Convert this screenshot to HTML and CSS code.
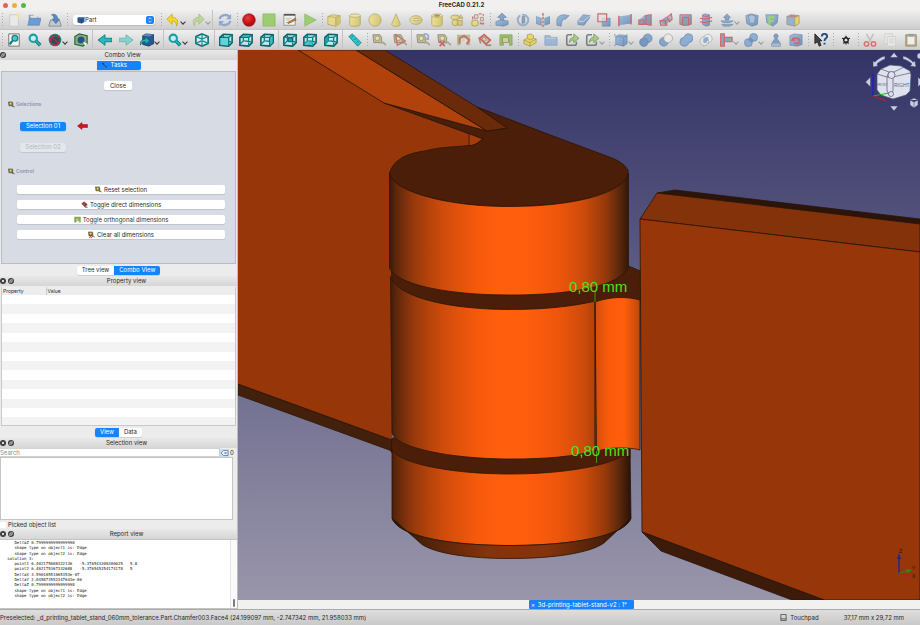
FILE: index.html
```html
<!DOCTYPE html>
<html lang="en">
<head>
<meta charset="utf-8">
<title>FreeCAD 0.21.2</title>
<link rel="stylesheet" href="styles.css">
</head>
<body>
<svg class="sprite" aria-hidden="true">
  <defs>
    <linearGradient id="gYellow"><stop offset="0" stop-color="#f0e28a"/><stop offset="1" stop-color="#d2bf5a"/></linearGradient>
    <linearGradient id="gBlue" x2="1" y2="1"><stop offset="0" stop-color="#8fb4dc"/><stop offset="1" stop-color="#5b84b4"/></linearGradient>
    <radialGradient id="gRed" cx=".4" cy=".35"><stop offset="0" stop-color="#ee3a3a"/><stop offset="1" stop-color="#b90d12"/></radialGradient>
  </defs>
  <symbol id="new" viewBox="0 0 16 16"><path d="M3 2h10v13H3z" fill="#e9e9e7" stroke="#c9c9c6"/><path d="M13 0l1 2 2 1-2 1-1 2-1-2-2-1 2-1z" fill="#f3ea7c"/></symbol>
  <symbol id="open" viewBox="0 0 16 16"><path d="M2 2h5l1 2h5v8H2z" fill="#8d9eae"/><path d="M4 3h8v6H4z" fill="#dfe4ea"/><path d="M1 14L3 6h13l-2 8z" fill="#6d9bd3" stroke="#5380b8" stroke-width=".7"/></symbol>
  <symbol id="save" viewBox="0 0 16 16"><path d="M1 14l2-6h10l2 6v1H1z" fill="#c4c8cd" stroke="#84898f"/><path d="M4 2c4-2 7 1 7 5h2l-4 5-4-5h2c0-2-1-4-3-5z" fill="#5a8ac4" stroke="#345f96" stroke-width=".7"/></symbol>
  <symbol id="part" viewBox="0 0 16 16"><path d="M1 4l5-2 9 1v9l-6 3-8-2z" fill="#2b568f"/><path d="M1 4l8 1 6-2M9 5v10" fill="none" stroke="#163258"/><path d="M1 4l5-2 9 1-6 2z" fill="#5d8cc5"/></symbol>
  <symbol id="undo" viewBox="0 0 16 16"><path d="M1 7l6-6v4c5 0 8 3 5 10 0-4-2-6-5-6v4z" fill="#f0d92a" stroke="#c3a613" stroke-width=".8"/></symbol>
  <symbol id="redo" viewBox="0 0 16 16"><path d="M15 7L9 1v4c-5 0-8 3-5 10 0-4 2-6 5-6v4z" fill="#bfd59a" stroke="#a2b981" stroke-width=".8"/></symbol>
  <symbol id="refresh" viewBox="0 0 16 16"><path d="M2 7c1-5 8-6 11-3M14 9c-1 5-8 6-11 3" fill="none" stroke="#8da9cf" stroke-width="2.6"/><path d="M15 1v6H9zM1 15V9h6z" fill="#8da9cf"/></symbol>
  <symbol id="rec" viewBox="0 0 16 16"><circle cx="8" cy="8" r="7.2" fill="url(#gRed)" stroke="#8c1518" stroke-width=".7"/></symbol>
  <symbol id="stop" viewBox="0 0 16 16"><path d="M1 1h14v14H1z" fill="#9dcc72" stroke="#86b45f" stroke-width=".7"/></symbol>
  <symbol id="edit" viewBox="0 0 16 16"><path d="M1 2h13v12H1z" fill="#f2f2ee" stroke="#8c8c88"/><path d="M1 1h13v2H1z" fill="#55554f"/><path d="M3 6h7M3 8h5M3 11h6" stroke="#b9b9b4"/><path d="M5 11l9-5 1 2-9 4z" fill="#c88433" stroke="#6b451c" stroke-width=".6"/></symbol>
  <symbol id="play" viewBox="0 0 16 16"><path d="M2 1l13 7-13 7z" fill="#9dcc72" stroke="#86b45f" stroke-width=".7"/></symbol>
  <symbol id="cube" viewBox="0 0 16 16"><path d="M1 4l5-2 9 1v9l-5 3-9-2z" fill="#ead979" stroke="#9f9240" stroke-width=".8"/><path d="M10 5l5-2v9l-5 3z" fill="#cfbd58"/><path d="M1 4l9 1 5-2M10 5v10" fill="none" stroke="#9f9240" stroke-width=".8"/></symbol>
  <symbol id="cyl" viewBox="0 0 16 16"><path d="M2 3v10c0 3 12 3 12 0V3z" fill="url(#gYellow)" stroke="#9f9240" stroke-width=".8"/><ellipse cx="8" cy="3" rx="6" ry="2" fill="#f1e69c" stroke="#9f9240" stroke-width=".8"/></symbol>
  <symbol id="sphere" viewBox="0 0 16 16"><circle cx="8" cy="8" r="7" fill="url(#gYellow)" stroke="#9f9240" stroke-width=".8"/></symbol>
  <symbol id="cone" viewBox="0 0 16 16"><path d="M8 1L3 13c1 3 9 3 10 0z" fill="url(#gYellow)" stroke="#9f9240" stroke-width=".8"/></symbol>
  <symbol id="torus" viewBox="0 0 16 16"><ellipse cx="8" cy="8" rx="7" ry="5" fill="url(#gYellow)" stroke="#9f9240" stroke-width=".8"/><ellipse cx="8" cy="7.5" rx="3" ry="1.5" fill="#e0e0de" stroke="#9f9240" stroke-width=".8"/></symbol>
  <symbol id="tube" viewBox="0 0 16 16"><path d="M2 3v10c0 3 12 3 12 0V3z" fill="url(#gYellow)" stroke="#9f9240" stroke-width=".8"/><ellipse cx="8" cy="3" rx="6" ry="2" fill="#f1e69c" stroke="#9f9240" stroke-width=".8"/><ellipse cx="8" cy="3" rx="3.500" ry="1.200" fill="#8d8244"/></symbol>
  <symbol id="prims" viewBox="0 0 16 16"><ellipse cx="6" cy="5" rx="5" ry="2.5" fill="url(#gYellow)" stroke="#9f9240"/><circle cx="6" cy="11" r="3.5" fill="url(#gYellow)" stroke="#9f9240"/><path d="M9 9l5-1v6H9zM12 2l3 4h-4z" fill="#d8c75f" stroke="#9f9240" stroke-width=".8"/></symbol>
  <symbol id="builder" viewBox="0 0 16 16"><path d="M1 9l4-1 3 1v5l-4 1-3-1z" fill="#ead979" stroke="#9f9240"/><path d="M4 2h4v4H4zM11 5h3v4h-3z" fill="#e8d9d5" stroke="#a7746c"/><path d="M9 1h3M2 4v3M14 1v2M10 12h5" stroke="#c9565a" stroke-width="1.6"/><path d="M10 10l4 4" stroke="#8c8c88"/></symbol>
  <symbol id="extrude" viewBox="0 0 16 16"><path d="M8 0l5 5h-3v4H6V5H3z" fill="#6c95c6" stroke="#44698f" stroke-width=".7"/><path d="M1 10l5-2 9 1v4l-5 2-9-1z" fill="url(#gBlue)" stroke="#4d7196" stroke-width=".7"/></symbol>
  <symbol id="revolve" viewBox="0 0 16 16"><circle cx="8" cy="8" r="6" fill="none" stroke="#8aa6c6" stroke-width="2.4"/><path d="M7 4h3v7l-3 1z" fill="#6f95c1" stroke="#4d7196" stroke-width=".7"/><path d="M6 0v4" stroke="#eaeaea" stroke-width="2"/></symbol>
  <symbol id="mirror" viewBox="0 0 16 16"><path d="M0 4l6 2v8l-6-2zM16 4l-6 2v8l6-2z" fill="url(#gBlue)" stroke="#4d7196" stroke-width=".6"/><path d="M8 0v16" stroke="#c9494d" stroke-width="1.6" stroke-dasharray="3 1.4"/></symbol>
  <symbol id="fillet" viewBox="0 0 16 16"><path d="M1 14V9c0-5 4-7 8-7l6 1-4 4c-3 0-5 2-5 8z" fill="url(#gBlue)" stroke="#4d7196" stroke-width=".7"/></symbol>
  <symbol id="chamfer" viewBox="0 0 16 16"><path d="M1 13V9l6-7 8 1-1 3-6 8z" fill="url(#gBlue)" stroke="#4d7196" stroke-width=".7"/><path d="M1 9l6 1 8-7" fill="none" stroke="#c5d7ea"/></symbol>
  <symbol id="face" viewBox="0 0 16 16"><path d="M6 6h9v9H6z" fill="url(#gBlue)" stroke="#4d7196" stroke-width=".7"/><path d="M1 1h10v9H1z" fill="#e2dfde" fill-opacity=".7" stroke="#cf4a4e" stroke-width="1.4"/></symbol>
  <symbol id="ruled" viewBox="0 0 16 16"><path d="M1 4l14-2v10L1 14z" fill="url(#gBlue)"/><path d="M1 3v12M15 1v12" stroke="#cf4a4e" stroke-width="1.6"/></symbol>
  <symbol id="loft" viewBox="0 0 16 16"><path d="M1 8l7-6 7 1v11L1 13z" fill="url(#gBlue)"/><path d="M1 8h6v5H1zM9 3l6-1v12l-6-1z" fill="#71829b" fill-opacity=".5" stroke="#cf4a4e" stroke-width="1.3"/></symbol>
  <symbol id="sweep" viewBox="0 0 16 16"><path d="M1 9l7-5 5 3-5 7z" fill="url(#gBlue)"/><path d="M1 9l6-1 2 6H2zM9 5l5-4 1 6-3 3z" fill="#71829b" fill-opacity=".5" stroke="#cf4a4e" stroke-width="1.3"/></symbol>
  <symbol id="section" viewBox="0 0 16 16"><path d="M1 2h13v11H1z" fill="url(#gBlue)" stroke="#a4555c"/><path d="M4 5h7v9H4z" fill="#7590b0" stroke="#cf4a4e" stroke-width="1.4"/></symbol>
  <symbol id="cross" viewBox="0 0 16 16"><path d="M4 2l3-1 5 1v12l-4 1-4-2z" fill="url(#gBlue)" stroke="#4d7196" stroke-width=".7"/><path d="M1 6l6 1 8-2M1 10l6 1 8-2M4 3l4 1 4-1" fill="none" stroke="#cf4a4e" stroke-width="1.3"/></symbol>
  <symbol id="offset" viewBox="0 0 16 16"><path d="M8 1l4 4h-2v3H6V5H4z" fill="#6c95c6" stroke="#44698f" stroke-width=".7"/><path d="M1 9h14l-4 2H4zM2 13h13l-4 2H4z" fill="#86a8cf" stroke="#4d7196" stroke-width=".7"/></symbol>
  <symbol id="thick" viewBox="0 0 16 16"><path d="M1 3l6-2 8 2-1 10-6 2-6-3z" fill="url(#gBlue)" stroke="#4d7196" stroke-width=".8"/><path d="M4 3l4-1 4 2-1 7-4 1-2-2z" fill="#9dbbdc" stroke="#4d7196" stroke-width=".7"/></symbol>
  <symbol id="proj" viewBox="0 0 16 16"><path d="M1 2h14l-1 9-5 4-7-4z" fill="url(#gBlue)" stroke="#4d7196" stroke-width=".7"/><path d="M5 14V5h6M5 9h5" fill="none" stroke="#8fcf5a" stroke-width="2.4"/></symbol>
  <symbol id="color" viewBox="0 0 16 16"><path d="M1 4l5-2 9 1-5 2z" fill="#d66d64"/><path d="M1 4l9 1v10l-9-2z" fill="#86a8cf"/><path d="M10 5l5-2v9l-5 3z" fill="#ecd23f"/><path d="M1 4l5-2 9 1v9l-5 3-9-2zM1 4l9 1 5-2M10 5v10" fill="none" stroke="#7c7666" stroke-width=".7"/></symbol>
  <symbol id="fitall" viewBox="0 0 16 16"><path d="M2 1h12v14H2z" fill="#f4f4f2" stroke="#6c6c68"/><circle cx="9" cy="6" r="3.3" fill="#55c3c6" stroke="#127f87" stroke-width="1.4"/><path d="M6 9l-3 4" stroke="#127f87" stroke-width="2.6"/></symbol>
  <symbol id="zoom" viewBox="0 0 16 16"><circle cx="6" cy="6" r="4.2" fill="#c9ecec" stroke="#14a0a6" stroke-width="2.4"/><path d="M9 9l5 5" stroke="#0c6c75" stroke-width="4"/><path d="M9 9l5 5" stroke="#21bcc0" stroke-width="2"/></symbol>
  <symbol id="draw" viewBox="0 0 16 16"><circle cx="8" cy="8" r="7.2" fill="#177f86"/><path d="M4 6l4-2 5 2v5l-4 2-5-2z" fill="#2a4c62"/><circle cx="8" cy="8" r="5.4" fill="none" stroke="#b62c2c" stroke-width="1.6"/><path d="M4 4l8 8" stroke="#b62c2c" stroke-width="1.6"/></symbol>
  <symbol id="bbox" viewBox="0 0 16 16"><path d="M1 4l5-3 9 2v9l-5 3-9-2z" fill="#84b37c" stroke="#28693c" stroke-width="1.4"/><circle cx="8" cy="8" r="4" fill="#2b4f8b"/><path d="M10 10l5 2-2 3z" fill="#f4f4f4"/></symbol>
  <symbol id="back" viewBox="0 0 16 16"><path d="M0 8l8-6v4h8v4H8v4z" fill="#21bcc0" stroke="#0c6c75" stroke-width=".9"/></symbol>
  <symbol id="fwd" viewBox="0 0 16 16"><path d="M16 8L8 2v4H0v4h8v4z" fill="#86d3d1" stroke="#65adae" stroke-width=".9"/></symbol>
  <symbol id="linkview" viewBox="0 0 16 16"><path d="M3 3l4-2 9 1v10l-6 3-7-2z" fill="#2b568f" stroke="#163258" stroke-width=".8"/><path d="M3 3l4-2 9 1-6 2z" fill="#5d8cc5"/><path d="M0 14c0-5 3-7 6-7V4l5 5-5 4v-3c-3 0-4 1-6 4z" fill="#1fb3b8" stroke="#0c5d68" stroke-width=".8"/></symbol>
  <symbol id="iso" viewBox="0 0 16 16"><path d="M8 1l7 3v8l-7 3-7-3V4z" fill="#d5eeec" stroke="#0b6b73" stroke-width="1.800"/><path d="M1 4l7 3 7-3M8 7v8M8 1v5M1 12l6-3M15 12l-6-3" fill="none" stroke="#0f8d93" stroke-width="1.400"/></symbol>
  <symbol id="vcube" viewBox="0 0 16 16"><path d="M1 5l4-3.500 10 .5v9l-4 4-10-1z" fill="#bfe8e6" stroke="#0b5f68" stroke-width="1.800"/><path d="M1 5h10l4-3M11 5v10M5 2v7l-4 4M6 9l8 1" fill="none" stroke="#0f8088" stroke-width="1.500"/></symbol>
  <symbol id="front" viewBox="0 0 16 16"><use href="#vcube"/><path d="M1 5h10v10l-10-1z" fill="#5ed6d8" stroke="#0b5f68"/></symbol>
  <symbol id="top" viewBox="0 0 16 16"><use href="#vcube"/><path d="M1 5l4-3 10 0-4 3z" fill="#34c4c8" stroke="#0b5f68"/></symbol>
  <symbol id="right" viewBox="0 0 16 16"><use href="#vcube"/><path d="M11 5l4-3v9l-4 4z" fill="#34c4c8" stroke="#0b5f68"/></symbol>
  <symbol id="rear" viewBox="0 0 16 16"><use href="#vcube"/><path d="M6 6h5v4H6z" fill="#16a5aa" stroke="#0b5f68"/></symbol>
  <symbol id="bottom" viewBox="0 0 16 16"><use href="#vcube"/><path d="M2 13l4-3h5v4z" fill="#34c4c8"/></symbol>
  <symbol id="left" viewBox="0 0 16 16"><use href="#vcube"/><path d="M2 6l3-3v6l-3 4z" fill="#16a5aa"/></symbol>
  <symbol id="ruler" viewBox="0 0 16 16"><path d="M1 4l4-3 10 10-4 4z" fill="#2fc4cb" stroke="#0c7a84" stroke-width=".9"/><path d="M6 3L4 5M9 6L7 8M12 9l-2 2" stroke="#0c7a84"/></symbol>
  <symbol id="tape" viewBox="0 0 16 16"><path d="M1 2h8l2 3v6H2z" fill="#b9b488" stroke="#77745f"/><circle cx="6" cy="6" r="2.6" fill="#ece284" stroke="#7a7a70" stroke-width=".8"/><path d="M9 11h4l3 3" fill="none" stroke="#9c9a7c" stroke-width="2"/></symbol>
  <symbol id="angle" viewBox="0 0 16 16"><use href="#tape"/><path d="M3 2l11 7-9 5z" fill="none" stroke="#c2565a" stroke-width="1.5"/></symbol>
  <symbol id="tref" viewBox="0 0 16 16"><use href="#tape"/><path d="M8 3c2-3 5-2 6 0v4H9" fill="none" stroke="#829fc5" stroke-width="2"/></symbol>
  <symbol id="tclear" viewBox="0 0 16 16"><use href="#tape"/><path d="M3 9l6 6M9 9l-6 6" stroke="#c8484d" stroke-width="2"/></symbol>
  <symbol id="tall" viewBox="0 0 16 16"><path d="M0 2h15v12h-3V6H4v8H0z" fill="#9bbd79"/><path d="M3 12V6l5-3 6 5-3 5" fill="none" stroke="#c65457" stroke-width="2.3"/><circle cx="7" cy="8" r="2" fill="#d4cf8a"/></symbol>
  <symbol id="tdir" viewBox="0 0 16 16"><path d="M2 6l5-4 7 6-5 5z" fill="#c6b99a" stroke="#c24a4e" stroke-width="2"/><circle cx="7" cy="7" r="2" fill="#ddd48a" stroke="#8d6b58" stroke-width=".8"/><path d="M1 5l2 7M9 14h6" stroke="#8d6b58" stroke-width="1.6"/></symbol>
  <symbol id="torth" viewBox="0 0 16 16"><path d="M1 2h14v12h-3V9H5v5H1z" fill="#86b84f" stroke="#5f8d38" stroke-width=".7"/><path d="M4 5h7v6H4z" fill="#d3cc80" stroke="#6f6c4f" stroke-width=".8"/></symbol>
  <symbol id="ypart" viewBox="0 0 16 16"><path d="M1 8l4-2V2l4-1 3 2v3l3 1v4l-7 4-7-3z" fill="#e9d44a" stroke="#8f7d2a" stroke-width=".8"/><path d="M1 8l7 3 7-4M8 11v4M5 6l4 2 3-2" fill="none" stroke="#8f7d2a" stroke-width=".8"/></symbol>
  <symbol id="folder" viewBox="0 0 16 16"><path d="M1 3h6l1 2h7v9H1z" fill="#8eaed3" stroke="#7593b8" stroke-width=".8"/><path d="M2 6h12" stroke="#b5cbe3"/></symbol>
  <symbol id="link" viewBox="0 0 16 16"><path d="M8 2H4q-2 0-2 2v8q0 2 2 2h7q2 0 2-2v-2" fill="none" stroke="#5f676b" stroke-width="1.800"/><path d="M5 11c0-4 2-6 5-6V1l6 5-6 5V8c-2 0-4 1-5 3z" fill="#93c869" stroke="#53833a" stroke-width=".8"/></symbol>
  <symbol id="bcube" viewBox="0 0 16 16"><path d="M2 4l4-2 9 1v9l-4 3-9-2z" fill="url(#gBlue)" stroke="#4d7196" stroke-width=".7"/><path d="M2 4l9 1 4-2M11 5v10" fill="none" stroke="#4d7196" stroke-width=".7"/><path d="M1 1v3M15 1v1M1 13v2" stroke="#777"/></symbol>
  <symbol id="bool" viewBox="0 0 16 16"><circle cx="10" cy="6" r="5" fill="#6f97c6" stroke="#456a96" stroke-width=".7"/><circle cx="5.5" cy="10.500" r="4.8" fill="#5f88b8" stroke="#456a96" stroke-width=".7"/></symbol>
  <symbol id="cutb" viewBox="0 0 16 16"><circle cx="5.500" cy="10" r="5" fill="#6f97c6" stroke="#456a96" stroke-width=".7"/><circle cx="10.500" cy="6" r="5" fill="#e9e9e7" stroke="#8f8f8c" stroke-width=".8"/></symbol>
  <symbol id="union" viewBox="0 0 16 16"><path d="M6 5a5 5 0 1 1 5 6 5 5 0 1 1-5-6z" fill="#7ba2cf" stroke="#456a96" stroke-width=".8"/></symbol>
  <symbol id="common" viewBox="0 0 16 16"><circle cx="10" cy="6.500" r="5" fill="#eeeeec" stroke="#9a9a98" stroke-width=".8"/><circle cx="6" cy="9.500" r="5" fill="#eeeeec" fill-opacity=".6" stroke="#9a9a98" stroke-width=".8"/><path d="M5.500 6.500c1-1 3-2 5-2 1 3-1 6-4 7-2 0-2-3-1-5z" fill="#7ba2cf"/></symbol>
  <symbol id="join" viewBox="0 0 16 16"><path d="M2 1h4v14H2z" fill="#8a96ad" stroke="#cf4a4e" stroke-width="1.5"/><path d="M6 5h9v5H6z" fill="#7796bd" stroke="#cf4a4e" stroke-width="1.3"/></symbol>
  <symbol id="split" viewBox="0 0 16 16"><circle cx="11" cy="5" r="4.500" fill="#7ba2cf" stroke="#456a96" stroke-width=".7"/><circle cx="5" cy="11" r="4.500" fill="#7ba2cf" stroke="#456a96" stroke-width=".7"/><path d="M6 6l4 4" stroke="#5a80ae" stroke-width="4"/></symbol>
  <symbol id="check" viewBox="0 0 16 16"><path d="M8 1c3 0 3 4 1 5l4 6v3H3v-3l4-6C5 5 5 1 8 1z" fill="#6c8fbb" stroke="#4a6686" stroke-width=".7"/><path d="M3 12h10v3H3z" fill="#9cb5d0"/></symbol>
  <symbol id="defeat" viewBox="0 0 16 16"><path d="M1 3l5-2 9 1v11l-5 2-9-1z" fill="url(#gBlue)" stroke="#4d7196" stroke-width=".7"/><path d="M4 8c3-4 8-2 8 1s-3 4-6 2" fill="none" stroke="#cf4a4e" stroke-width="2"/><path d="M2 9l3-5 2 5z" fill="#cf4a4e"/></symbol>
  <symbol id="whats" viewBox="0 0 16 16"><path d="M1 1l8 8H6l2 5-2 1-2-5-3 2z" fill="#3e4549" stroke="#222"/><path d="M9 4c0-4 6-4 6 0 0 2-3 2-3 5M12 11v2" fill="none" stroke="#234f85" stroke-width="2.200"/></symbol>
  <symbol id="star" viewBox="0 0 16 16"><circle cx="8" cy="8" r="2.600" fill="none" stroke="#222" stroke-width="1.500"/><path d="M8 3v3M8 10v3M3.500 6l3 1M12.500 6l-3 1M5 12l2-2M11 12l-2-2" stroke="#222" stroke-width="1.400"/></symbol>
  <symbol id="scis" viewBox="0 0 16 16"><path d="M4 1l5 9M12 1l-5 9" stroke="#bdbdbb" stroke-width="1.600"/><circle cx="4" cy="12.500" r="2.500" fill="none" stroke="#dc6e6e" stroke-width="1.700"/><circle cx="12" cy="12.500" r="2.500" fill="none" stroke="#dc6e6e" stroke-width="1.700"/></symbol>
  <symbol id="copy" viewBox="0 0 16 16"><path d="M2 1h9v11H2z" fill="#e8e8e6" stroke="#cfcfcc"/><path d="M5 4h9v11H5z" fill="#e8e8e6" stroke="#cfcfcc"/><path d="M7 7h5M7 9h5M7 11h5" stroke="#cfcfcc"/></symbol>
  <symbol id="paste" viewBox="0 0 16 16"><path d="M2 2h12v13H2z" fill="#b8ac8a" stroke="#978d70"/><path d="M4 4h8v9H4z" fill="#efefea"/><path d="M5 1h6v3H5z" fill="#9b9d9b"/></symbol>
  <symbol id="mtape" viewBox="0 0 16 16"><path d="M1 2h9l1 3v6H2z" fill="#6e6a33" stroke="#3d3b2c"/><circle cx="6" cy="6" r="2.600" fill="#e6da55"/><path d="M9 12h4l3 3" fill="none" stroke="#4b4931" stroke-width="2"/></symbol>
  <symbol id="mdir" viewBox="0 0 16 16"><path d="M2 6l5-4 7 6-5 5z" fill="#5b3b2c" stroke="#b22e26" stroke-width="2"/><circle cx="7" cy="7" r="1.500" fill="#d8c96a"/><path d="M9 14h6" stroke="#4b3528" stroke-width="2"/></symbol>
  <symbol id="mclear" viewBox="0 0 16 16"><use href="#mtape"/><path d="M3 9l6 6M9 9l-6 6" stroke="#b9221f" stroke-width="2.400"/></symbol>
  <symbol id="close" viewBox="0 0 16 16"><circle cx="8" cy="8" r="8" fill="#3b3b3b"/><path d="M5 5l6 6M11 5l-6 6" stroke="#fff" stroke-width="2.200"/></symbol>
  <symbol id="float" viewBox="0 0 16 16"><circle cx="8" cy="8" r="8" fill="#3b3b3b"/><path d="M7 4h5v5H7zM4 7h5v5H4z" fill="none" stroke="#ddd" stroke-width="1.400"/></symbol>
</svg>

<header>
  <div class="titlebar"><span class="lights"><i class="red"></i><i class="amber"></i><i class="green"></i></span><h1>FreeCAD 0.21.2</h1></div>
  <div class="toolbar" role="toolbar" aria-label="File and solids">
    <span class="grip"></span>
    <div class="tools file"><button aria-label="New"><svg><use href="#new"/></svg></button><button aria-label="Open"><svg><use href="#open"/></svg></button><button aria-label="Save"><svg><use href="#save"/></svg></button></div>
    <span class="grip"></span>
    <label class="workbench"><svg><use href="#part"/></svg><select aria-label="Workbench"><option>Part</option></select><svg class="chev" viewBox="0 0 8 8"><path d="M2 3l2-2 2 2M2 5l2 2 2-2"/></svg></label>
    <span class="grip"></span>
    <div class="tools history"><button class="drop" aria-label="Undo"><svg><use href="#undo"/></svg></button><button class="drop dim" aria-label="Redo"><svg><use href="#redo"/></svg></button></div>
    <span class="rule"></span>
    <div class="tools one"><button aria-label="Refresh"><svg><use href="#refresh"/></svg></button></div>
    <span class="grip"></span>
    <div class="tools macro"><button aria-label="Record"><svg><use href="#rec"/></svg></button><button aria-label="Stop"><svg><use href="#stop"/></svg></button><button aria-label="Macros"><svg><use href="#edit"/></svg></button><button aria-label="Run"><svg><use href="#play"/></svg></button></div>
    <span class="grip"></span>
    <div class="tools muted solids"><button aria-label="Cube"><svg><use href="#cube"/></svg></button><button aria-label="Cylinder"><svg><use href="#cyl"/></svg></button><button aria-label="Sphere"><svg><use href="#sphere"/></svg></button><button aria-label="Cone"><svg><use href="#cone"/></svg></button><button aria-label="Torus"><svg><use href="#torus"/></svg></button><button aria-label="Tube"><svg><use href="#tube"/></svg></button><button aria-label="Primitives"><svg><use href="#prims"/></svg></button><button aria-label="Shape builder"><svg><use href="#builder"/></svg></button></div>
    <span class="grip"></span>
    <div class="tools muted shape"><button aria-label="Extrude"><svg><use href="#extrude"/></svg></button><button aria-label="Revolve"><svg><use href="#revolve"/></svg></button><button aria-label="Mirror"><svg><use href="#mirror"/></svg></button><button aria-label="Fillet"><svg><use href="#fillet"/></svg></button><button aria-label="Chamfer"><svg><use href="#chamfer"/></svg></button><button aria-label="Make face"><svg><use href="#face"/></svg></button><button aria-label="Ruled surface"><svg><use href="#ruled"/></svg></button><button aria-label="Loft"><svg><use href="#loft"/></svg></button><button aria-label="Sweep"><svg><use href="#sweep"/></svg></button><button aria-label="Section"><svg><use href="#section"/></svg></button><button aria-label="Cross sections"><svg><use href="#cross"/></svg></button><button class="drop dim" aria-label="Offset"><svg><use href="#offset"/></svg></button><button aria-label="Thickness"><svg><use href="#thick"/></svg></button><button aria-label="Projection"><svg><use href="#proj"/></svg></button><button aria-label="Colour per face"><svg><use href="#color"/></svg></button></div>
  </div>
  <div class="toolbar" role="toolbar" aria-label="View and measure">
    <span class="grip"></span>
    <div class="tools view"><button aria-label="Fit all"><svg><use href="#fitall"/></svg></button><button aria-label="Fit selection"><svg><use href="#zoom"/></svg></button><button class="drop" aria-label="Draw style"><svg><use href="#draw"/></svg></button><button aria-label="Bounding box"><svg><use href="#bbox"/></svg></button></div>
    <span class="rule"></span>
    <div class="tools nav"><button aria-label="Back"><svg><use href="#back"/></svg></button><button aria-label="Forward"><svg><use href="#fwd"/></svg></button><button class="drop" aria-label="Linked object"><svg><use href="#linkview"/></svg></button></div>
    <span class="rule"></span>
    <div class="tools history"><button class="drop" aria-label="Zoom"><svg><use href="#zoom"/></svg></button><button aria-label="Isometric"><svg><use href="#iso"/></svg></button></div>
    <span class="rule"></span>
    <div class="tools file"><button aria-label="Front"><svg><use href="#front"/></svg></button><button aria-label="Top"><svg><use href="#top"/></svg></button><button aria-label="Right"><svg><use href="#right"/></svg></button></div>
    <span class="rule"></span>
    <div class="tools file"><button aria-label="Rear"><svg><use href="#rear"/></svg></button><button aria-label="Bottom"><svg><use href="#bottom"/></svg></button><button aria-label="Left"><svg><use href="#left"/></svg></button></div>
    <span class="rule"></span>
    <div class="tools one"><button aria-label="Measure distance"><svg><use href="#ruler"/></svg></button></div>
    <span class="grip"></span>
    <div class="tools muted two"><button aria-label="Measure linear"><svg><use href="#tape"/></svg></button><button aria-label="Measure angular"><svg><use href="#angle"/></svg></button></div>
    <span class="rule"></span>
    <div class="tools muted measure"><button aria-label="Refresh dimensions"><svg><use href="#tref"/></svg></button><button aria-label="Clear dimensions"><svg><use href="#tclear"/></svg></button><button aria-label="Toggle all"><svg><use href="#tall"/></svg></button><button aria-label="Toggle direct"><svg><use href="#tdir"/></svg></button><button aria-label="Toggle orthogonal"><svg><use href="#torth"/></svg></button></div>
    <span class="grip"></span>
    <div class="tools muted view"><button aria-label="Create part"><svg><use href="#ypart"/></svg></button><button aria-label="Create group"><svg><use href="#folder"/></svg></button><button aria-label="Make link"><svg><use href="#link"/></svg></button><button class="drop dim" aria-label="Link actions"><svg><use href="#link"/></svg></button></div>
    <span class="grip"></span>
    <div class="tools muted boolean"><button class="drop dim" aria-label="Compound"><svg><use href="#bcube"/></svg></button><button aria-label="Boolean"><svg><use href="#bool"/></svg></button><button aria-label="Cut solid"><svg><use href="#cutb"/></svg></button><button aria-label="Union"><svg><use href="#union"/></svg></button><button aria-label="Intersection"><svg><use href="#common"/></svg></button><button class="drop dim" aria-label="Join"><svg><use href="#join"/></svg></button><button class="drop dim" aria-label="Split"><svg><use href="#split"/></svg></button><button aria-label="Check geometry"><svg><use href="#check"/></svg></button><button aria-label="Defeaturing"><svg><use href="#defeat"/></svg></button></div>
    <span class="grip"></span>
    <div class="tools one"><button aria-label="What's this"><svg><use href="#whats"/></svg></button></div>
    <span class="grip"></span>
    <div class="tools one"><button aria-label="Custom macro"><svg><use href="#star"/></svg></button></div>
    <span class="grip"></span>
    <div class="tools file"><button aria-label="Cut"><svg><use href="#scis"/></svg></button><button aria-label="Copy"><svg><use href="#copy"/></svg></button><button aria-label="Paste"><svg><use href="#paste"/></svg></button></div>
  </div>
</header>

<div class="workspace">
  <aside>
    <section class="combo">
      <div class="dock-title"><button aria-label="Float panel"><svg><use href="#float"/></svg></button><h2>Combo View</h2></div>
      <div class="tabs top"><button class="on tasks-tab"><svg viewBox="0 0 16 16"><path d="M2 1l3 3 1 3 8 7-2 1-8-8-3-1-1-3z" fill="#233a5c"/></svg>Tasks</button></div>
      <div class="tasks">
        <button class="push close">Close</button>
        <h3><svg><use href="#mtape"/></svg>Selections</h3>
        <div class="sel"><button class="push on">Selection 01</button><svg class="arrow" viewBox="0 0 22 16"><path d="M1 8l9-7v4h11v6H10v4z" fill="#d3131f" stroke="#8e0d15"/></svg></div>
        <div class="sel"><button class="push" disabled>Selection 02</button></div>
        <h3 class="control"><svg><use href="#mtape"/></svg>Control</h3>
        <div class="actions">
          <button class="push"><svg><use href="#mtape"/></svg>Reset selection</button>
          <button class="push"><svg><use href="#mdir"/></svg>Toggle direct dimensions</button>
          <button class="push"><svg><use href="#torth"/></svg>Toggle orthogonal dimensions</button>
          <button class="push"><svg><use href="#mclear"/></svg>Clear all dimensions</button>
        </div>
      </div>
      <div class="tabs"><button>Tree view</button><button class="on">Combo View</button></div>
    </section>
    <section class="property">
      <div class="dock-title"><button aria-label="Close panel"><svg><use href="#close"/></svg></button><button aria-label="Float panel"><svg><use href="#float"/></svg></button><h2>Property view</h2></div>
      <div class="grid">
        <table>
          <thead><tr><th>Property</th><th>Value</th></tr></thead>
          <tbody><tr><td></td><td></td></tr><tr><td></td><td></td></tr><tr><td></td><td></td></tr><tr><td></td><td></td></tr><tr><td></td><td></td></tr><tr><td></td><td></td></tr><tr><td></td><td></td></tr><tr><td></td><td></td></tr><tr><td></td><td></td></tr><tr><td></td><td></td></tr><tr><td></td><td></td></tr><tr><td></td><td></td></tr><tr><td></td><td></td></tr><tr><td></td><td></td></tr></tbody>
        </table>
      </div>
      <div class="tabs"><button class="on">View</button><button>Data</button></div>
    </section>
    <section class="selection">
      <div class="dock-title"><button aria-label="Close panel"><svg><use href="#close"/></svg></button><button aria-label="Float panel"><svg><use href="#float"/></svg></button><h2>Selection view</h2></div>
      <div class="search"><input type="text" placeholder="Search" aria-label="Search"><button aria-label="Clear search"><svg viewBox="0 0 16 16"><path d="M1 8l5-5h9v10H6z" fill="#e9f0f8" stroke="#4b75a8" stroke-width="1.500"/><path d="M8 6l4 4M12 6l-4 4" stroke="#4b75a8" stroke-width="1.500"/></svg></button><output>0</output></div>
      <div class="list"></div>
      <label class="picked"><input type="checkbox">Picked object list</label>
    </section>
    <section class="report">
      <div class="dock-title"><button aria-label="Close panel"><svg><use href="#close"/></svg></button><button aria-label="Float panel"><svg><use href="#float"/></svg></button><h2>Report view</h2></div>
      <div class="log">
        <div class="lines"><p>      DeltaZ 0.7999999999999998</p><p>      shape type on object1 is: Edge</p><p>      shape type on object2 is: Edge</p><p>   solution 3:</p><p>      point1 6.402175008322136   -5.376543208300625   5.8</p><p>      point2 6.402175367332688   -5.376545254174178   5</p><p>      DeltaX 3.59010551065353e-07</p><p>      DeltaY 2.045873552347643e-06</p><p>      DeltaZ 0.7999999999999998</p><p>      shape type on object1 is: Edge</p><p>      shape type on object2 is: Edge</p></div>
        <div class="scroll"><i></i></div>
      </div>
    </section>
  </aside>

  <main>
    <svg class="scene" viewBox="238 50 682 550" preserveAspectRatio="xMidYMid slice" role="img" aria-label="3D view of the hinge">
      <defs>
        <linearGradient id="sky" x2="0" y2="1"><stop offset="0" stop-color="#333366"/><stop offset="1" stop-color="#9996ab"/></linearGradient>
        <linearGradient id="body" gradientUnits="userSpaceOnUse" x1="389" x2="630" y1="0" y2="0"><stop offset="0" stop-color="#37190a"/><stop offset=".03" stop-color="#5d270b"/><stop offset=".1" stop-color="#96390b"/><stop offset=".22" stop-color="#ce4b0b"/><stop offset=".36" stop-color="#f4590c"/><stop offset=".45" stop-color="#ff5e0c"/><stop offset=".57" stop-color="#ff5e0c"/><stop offset=".7" stop-color="#ee560c"/><stop offset=".8" stop-color="#d04c0b"/><stop offset=".9" stop-color="#94390b"/><stop offset=".96" stop-color="#58260b"/><stop offset="1" stop-color="#2c1409"/></linearGradient>
        <linearGradient id="web" gradientUnits="userSpaceOnUse" x1="595" x2="640" y1="0" y2="0"><stop offset="0" stop-color="#d34d0b"/><stop offset=".3" stop-color="#f95b0c"/><stop offset=".65" stop-color="#ff5e0c"/><stop offset="1" stop-color="#bd470b"/></linearGradient>
        <linearGradient id="base" gradientUnits="userSpaceOnUse" x1="392" x2="631" y1="0" y2="0"><stop offset="0" stop-color="#241108"/><stop offset=".15" stop-color="#52230a"/><stop offset=".4" stop-color="#85330b"/><stop offset=".65" stop-color="#85330b"/><stop offset=".88" stop-color="#4b1f09"/><stop offset="1" stop-color="#241108"/></linearGradient>
      </defs>
      <path d="M238 50h682v550H238z" fill="url(#sky)"/>
      <g stroke="#2b1508" stroke-width=".8" stroke-linejoin="round">
        <path d="M238 384l154 56v11L238 395z" fill="#43200b"/>
        <path d="M238 50h60l86 53 99 36-8 40-83 40v221L238 384z" fill="#973709" stroke="none"/>
        <path d="M238 384l154 56" fill="none"/>
        <path d="M469 133l14 6-8 6-6 1z" fill="#a53d0b"/>
        <path d="M384 103l103 28 20-3-30-21 68 26 63 23.500c9 3 16 7 20 13.500v4c-5 20-56 32.500-119 32.500S392 191 389.500 173c4-12 14-19 35-22 15-4 29-4 45-5.500 6 0 9-4 14-6.500z" fill="#4a1e09"/>
        <path d="M298 50h58l131 81-103-28z" fill="#b1420b"/>
        <path d="M356 50h29l92 57 30 21-20 3z" fill="#6b2a0a"/>
        <path d="M628.500 266l12 5v31l-35 10-60 10-90 0-62-20-2-30 4-6z" fill="#4a1e09"/>
        <path d="M392 438l-1 14 40 25 160 0 39-18v-12l-60-6z" fill="#4a1e09"/>
        <path d="M389.500 173C392 191 445 206.500 509 206.500S623 194 628.500 173v93.500C622 285 575 295 510 295S396 284 389.500 268z" fill="url(#body)"/>
        <path d="M390.500 276c5 20 55 33.500 120 33.500 34 0 62-3 85-8.500l1.500 149.500c-22 6-51 8.500-86 8.500-63 0-116-12-119-26z" fill="url(#body)"/>
        <path d="M595 302c13-5 31-6 45-2v150c-10-3-33-3-43.500 1.500z" fill="url(#web)"/>
        <path d="M392 449c5 14 58 25 118 25 62 0 113-11 120-25l1 69c-6 18-58 27.500-121 27.500S398 536 392 518z" fill="url(#body)"/>
        <path d="M392 518c6 18 55 27.500 118 27.500S625 536 631 518l-27 25c-14 10-50 15.500-94 15.500-42 0-74-5-88-14z" fill="url(#base)"/>
        <path d="M657 193l18-3 245 29v5z" fill="#2b1409"/>
        <path d="M640 219l17-26 263 31v28z" fill="#83320a"/>
        <path d="M640 219l280 33v348h-96L642 532z" fill="#973709"/>
        <path d="M642 532l19 19 131 49h32z" fill="#3d1b0a"/>
      </g>
      <g stroke="#2b1508"><path d="M595 302v149"/></g>
      <g stroke="#42b01e" stroke-width=".8"><path d="M595 291v11M596.500 451v12"/></g>
      <g class="dims"><text x="569" y="292">0,80 mm</text><text x="571" y="456">0,80 mm</text></g>

      <g fill="#c9cde8" stroke="#3a3c5c" stroke-width=".5">
        <path d="M890 57.500l4-5 4 5zM890 106h8l-4 5zM865.500 82l5-5v10zM923 82l-5-5v10z"/>
        <path d="M885 56c-5 1-8 4-10 6l-2-1v6l5-1-1-2c2-2 5-4 8-5zM903 56c5 1 8 4 10 6l2-1 1 6-6-1 2-2c-2-2-5-4-9-5z"/>
        <circle cx="920" cy="56" r="3"/>
        <path d="M910 100l4-2 4 2v5l-4 3-4-3zM910 100l4 2 4-2M914 102v6"/>
      </g>
      <g fill="#dfe2ee" stroke="#55586c" stroke-width=".7" stroke-linejoin="round">
        <path d="M877 74l4-5 9-4 11 1 9 5 1 4-1 16-4 4-13 4-12-4-4-5z"/>
        <path d="M877 74l10 3h6l17-4M881 69l8 3h5l10-5M889 72l-2 5v14l3 5M894 72l-1 5v14l-3 5" fill="none"/>
        <circle cx="891.500" cy="75" r="3.500"/><circle cx="891" cy="94" r="2.500"/>
      </g>
      <g class="faces"><text x="877" y="86">FRONT</text><text x="894" y="87">RIGHT</text></g>
      <path d="M873 96V74" stroke="#1a1ae0" stroke-width="1.200"/><path d="M873 96l16-3" stroke="#20b030"/><path d="M873 96l13 5" stroke="#c02020" stroke-width="1.200"/>
      <path d="M899 573v-16" stroke="#26268c" stroke-width="1.500"/><path d="M897 559l2-6 2 6z" fill="#26268c"/>
      <path d="M899 573l9-2" stroke="#3a7a1e"/><path d="M906 569l6 1-5 3z" fill="#2f8a22"/>
      <path d="M899 573l8 3" stroke="#a32222"/><path d="M906 574l6 4-6 1z" fill="#a32a2a"/>
      <g class="axes"><text x="899" y="553">Z</text><text x="912" y="570">Y</text><text x="912" y="578">X</text></g>
    </svg>
    <div class="doc-tabs"><button><span>×</span>3d-printing-tablet-stand-v2 : 1*</button></div>
  </main>
</div>

<footer>
  <span class="msg">Preselected: _d_printing_tablet_stand_060mm_tolerance.Part.Chamfer003.Face4 (24.199097 mm, -2.747342 mm, 21.958033 mm)</span>
  <button><svg viewBox="0 0 16 16"><path d="M2 1h12v14H2zM2 11h12" fill="none" stroke="#444" stroke-width="1.800"/></svg>Touchpad</button>
  <span class="size">37,17 mm x 29,72 mm</span>
</footer>
</body>
</html>
```
FILE: styles.css
```css
* { box-sizing: border-box; }

body {
  margin: 0;
  height: 100vh;
  display: flex;
  flex-direction: column;
  overflow: hidden;
  background: #ececec;
  color: #2a2a2a;
  font: 6px/8px Inter, "Liberation Sans", sans-serif;
}

h1, h2, h3, p { margin: 0; font-size: inherit; font-weight: 500; }

button {
  margin: 0;
  padding: 0;
  border: 0;
  background: none;
  color: inherit;
  font: inherit;
}

.sprite { position: absolute; width: 0; height: 0; }

/* Title bar */
.titlebar {
  display: grid;
  grid-template-columns: 1fr auto 1fr;
  align-items: center;
  height: 10px;
  padding-left: 3px;
  background: #f1f0ee;
}
.titlebar h1 { font-weight: 700; }
.lights { display: flex; gap: 4px; }
.lights i { width: 5px; height: 5px; border-radius: 50%; }
.red { background: #ec5f57; }
.amber { background: #e9b03c; }
.green { background: #55b947; }

/* Toolbars */
.toolbar {
  display: flex;
  align-items: center;
  height: 20px;
  background: linear-gradient(#f0efef, #cecece);
  border-bottom: 1px solid #c2c2c2;
}
.grip { flex: none; width: 4px; height: 14px; }
.grip::before {
  content: "";
  display: block;
  width: 1px;
  height: 100%;
  margin-left: 2px;
  background: repeating-linear-gradient(#a9a9a9 0 1px, transparent 1px 3px);
}
.rule { flex: none; width: 1px; height: 19px; margin: 0 1px; background: #c3c3c3; }
.tools { flex: none; display: flex; }
.tools button {
  flex: 1;
  display: flex;
  justify-content: center;
  align-items: center;
  height: 18px;
}
.tools svg { flex: none; width: 14px; height: 14px; }
.muted svg { opacity: .8; }
.tools .drop { flex: 0 0 25px; gap: 1px; }
.tools .drop::after {
  content: "";
  width: 3px;
  height: 3px;
  margin-top: 4px;
  border: solid #333;
  border-width: 0 1px 1px 0;
  rotate: 45deg;
}
.tools .dim::after { border-color: #999; }
.one { width: 21px; }
.two { width: 41px; }
.history { width: 48px; }
.file { width: 61px; }
.nav { width: 68px; }
.macro { width: 81px; }
.view { width: 87px; }
.measure { width: 103px; }
.solids { width: 164px; }
.boolean { width: 195px; }
.shape { width: 311px; }

.workbench {
  display: flex;
  align-items: center;
  width: 82px;
  height: 10px;
  margin: 0 4px;
  padding: 0 1px 0 4px;
  border-radius: 3px;
  background: #fff;
  box-shadow: 0 1px 1px #bbb;
}
.workbench svg { width: 8px; height: 8px; }
.workbench select {
  flex: 1;
  padding: 0;
  border: 0;
  appearance: none;
  background: none;
  color: inherit;
  font: inherit;
}
.workbench .chev { padding: 1px; border-radius: 2px; background: #1482fa; fill: none; stroke: #fff; }

/* Docked panels */
.workspace { flex: 1; display: flex; min-height: 0; }
aside {
  flex: 0 0 238px;
  display: flex;
  flex-direction: column;
  border-right: 1px solid #bdbdbd;
}
.combo { height: 226px; }
.property { height: 162px; }
.selection { height: 91px; }
.report { flex: 1; }
section { display: flex; flex-direction: column; }

.dock-title {
  flex: none;
  display: flex;
  align-items: center;
  gap: 2px;
  height: 10px;
  background: linear-gradient(#e8e8e8, #d6d6d6);
}
.dock-title button { display: flex; flex: none; width: 6px; }
.dock-title svg { width: 6px; height: 6px; }
.dock-title h2 { flex: 1; font-weight: 400; text-align: center; }

.tabs { flex: none; display: flex; justify-content: center; align-items: center; height: 12px; }
.tabs button { height: 9px; padding: 0 5px; background: #fff; box-shadow: 0 1px 1px #ccc; }
.tabs button:first-child { border-radius: 2px 0 0 2px; }
.tabs button:last-child { border-radius: 0 2px 2px 0; }
.tabs .on, .push.on { background: #1683fb; color: #fff; }
.tabs .tasks-tab { display: flex; align-items: center; gap: 3px; width: 44px; border-radius: 2px; }
.tabs svg { width: 6px; height: 6px; }
.top { height: 10px; }

.tasks {
  flex: 1;
  display: flex;
  flex-direction: column;
  margin: 1px 1px 0;
  padding: 9px 10px 0 6px;
  border: 1px solid #b9bcc0;
  background: #d7dce4;
}
.tasks h3 {
  display: flex;
  align-items: center;
  gap: 1px;
  height: 8px;
  margin: 10px 0 12px;
  color: #8a90ab;
  font-size: 5px;
  font-weight: 600;
}
.tasks h3 svg { width: 7px; height: 7px; }
.push {
  height: 9px;
  border-radius: 2px;
  background: #fff;
  box-shadow: 0 1px 1px #bfc3ca;
}
.push:disabled { background: #e3e6eb; color: #b5b8bd; }
.close { flex: none; align-self: center; width: 28px; margin-right: -3px; }
.sel { display: flex; align-items: center; gap: 11px; height: 12px; margin-bottom: 9px; padding-left: 12px; }
.sel .push { width: 46px; }
.arrow { width: 11px; height: 8px; }
.tasks .control { margin: 5px 0 10px; }
.actions { display: grid; gap: 6px; padding-left: 9px; }
.actions .push { display: flex; justify-content: center; align-items: center; gap: 2px; }
.actions svg { width: 7px; height: 7px; }

/* Property table */
.grid { flex: 1; margin: 1px 1px 0; overflow: hidden; border: 1px solid #c8c8c8; border-top: 0; background: #fff; }
table { width: 100%; height: 140px; border-collapse: collapse; table-layout: fixed; }
th { height: 8px; padding: 0 0 0 1px; background: #ededed; font-size: 5px; font-weight: 400; text-align: left; }
th:first-child { width: 44px; border-right: 1px solid #ccc; }
td { padding: 0; }
tbody tr:nth-child(even) { background: #f3f3f3; }

/* Selection */
.search { flex: none; display: flex; align-items: center; height: 9px; }
.search input {
  flex: 1;
  min-width: 0;
  height: 9px;
  padding: 0;
  border: 1px solid #d2d2d2;
  border-left: 0;
  background: #fff;
  font: inherit;
}
.search input::placeholder { color: #8c8c8c; }
.search button { display: flex; width: 9px; background: #c7daf0; }
.search svg { width: 9px; height: 8px; }
.search output { width: 8px; padding-left: 1px; }
.list { flex: 1; margin-right: 4px; border: 1px solid #c4c4c4; background: #fff; }
.picked { flex: none; display: flex; align-items: center; gap: 2px; height: 9px; }
.picked input { width: 6px; height: 6px; margin: 0; appearance: none; border-radius: 1px; background: #fff; }

/* Report */
.log { flex: 1; display: flex; justify-content: space-between; border: solid #c4c4c4; border-width: 1px 0; background: #fff; }
.lines { display: flex; flex-direction: column; justify-content: space-between; height: 58px; }
.lines p { font: 4px/5px "DejaVu Sans Mono", "Liberation Mono", monospace; white-space: pre; color: #111; }
.scroll { display: flex; align-items: flex-end; width: 7px; padding: 1px 2px; border-left: 1px solid #e6e6e6; background: #fafafa; }
.scroll i { width: 4px; height: 8px; border-radius: 2px; background: #7d7d7d; }

/* 3D view */
main { flex: 1; display: flex; flex-direction: column; min-width: 0; }
.scene { flex: 1; display: block; width: 100%; min-height: 0; }
.dims { fill: #4ee01e; font: 15px "Liberation Sans", Arial, sans-serif; }
.faces { fill: #62657a; font: 5px "Liberation Sans", Arial, sans-serif; }
.faces text:first-child { font-size: 3px; }
.axes { fill: #241410; font: 5px "Liberation Sans", Arial, sans-serif; }
.doc-tabs { flex: none; display: flex; justify-content: center; height: 9px; padding-left: 5px; background: #f1f1f0; }
.doc-tabs button { display: flex; align-items: center; gap: 3px; padding: 0 7px 0 2px; border-radius: 1px; background: #1683fb; color: #fff; font-weight: 400; }

footer {
  flex: none;
  display: flex;
  align-items: center;
  height: 16px;
  padding: 0 16px 0 0;
  border-top: 1px solid #a9a9a9;
  background: linear-gradient(#dedede, #c9c9c9);
}
.msg { flex: 1; }
footer button { display: flex; align-items: center; gap: 3px; }
footer svg { width: 7px; height: 7px; }
.size { margin-left: 25px; }
```
